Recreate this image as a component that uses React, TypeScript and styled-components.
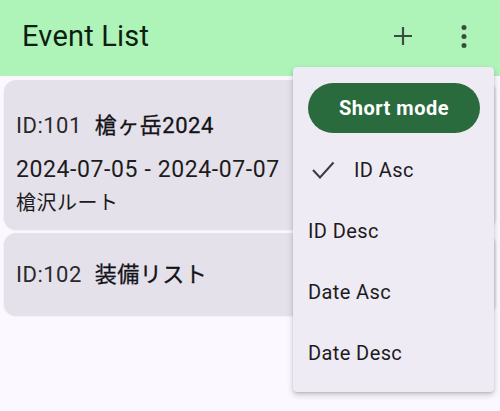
import React from 'react';
import styled, { createGlobalStyle } from 'styled-components';

const GlobalStyle = createGlobalStyle`
  html, body {
    margin: 0;
    padding: 0;
    background: #fcf8ff;
    font-family: Roboto, 'Noto Sans CJK JP', sans-serif;
  }
`;

const events = [
  {
    id: 101,
    title: '槍ヶ岳2024',
    date: '2024-07-05 - 2024-07-07',
    note: '槍沢ルート',
  },
  { id: 102, title: '装備リスト' },
];

const sortItems = ['ID Asc', 'ID Desc', 'Date Asc', 'Date Desc'];

const App = () => {
  return (
    <Page>
      <GlobalStyle />
      <AppBar>
        <Title>Event List</Title>
        <Actions>
          <IconButton aria-label="add">
            <svg width="30" height="30" viewBox="0 0 30 30">
              <path d="M15 6v18M6 15h18" stroke="#3f4a41" strokeWidth="2.2" fill="none" />
            </svg>
          </IconButton>
          <IconButton aria-label="more">
            <svg width="30" height="30" viewBox="0 0 30 30">
              <circle cx="15" cy="6.5" r="2.5" fill="#3f4a41" />
              <circle cx="15" cy="15.5" r="2.5" fill="#3f4a41" />
              <circle cx="15" cy="24.5" r="2.5" fill="#3f4a41" />
            </svg>
          </IconButton>
        </Actions>
      </AppBar>

      <List>
        {events.map((ev) => (
          <Card key={ev.id} $expanded={!!ev.date}>
            <CardHeader>
              <EventId>ID:{ev.id}</EventId>
              <EventTitle>{ev.title}</EventTitle>
            </CardHeader>
            {ev.date && <DateLine>{ev.date}</DateLine>}
            {ev.note && <Note>{ev.note}</Note>}
          </Card>
        ))}
      </List>

      <Menu>
        <ModeButton>Short mode</ModeButton>
        <MenuList>
          {sortItems.map((item, i) => (
            <MenuItem key={item}>
              {i === 0 && (
                <CheckMark width="24" height="20" viewBox="0 0 24 20">
                  <polyline
                    points="2,10 9,17.5 22.5,2.5"
                    stroke="#3d3a42"
                    strokeWidth="2"
                    fill="none"
                  />
                </CheckMark>
              )}
              <span>{item}</span>
            </MenuItem>
          ))}
        </MenuList>
      </Menu>
    </Page>
  );
};

const Page = styled.div`
  position: relative;
  width: 500px;
  height: 411px;
  overflow: hidden;
  background: #fcf8ff;
`;

const AppBar = styled.header`
  height: 76px;
  background: #aef4b9;
  display: flex;
  align-items: center;
  justify-content: space-between;
  padding: 0 21px 0 22px;
  box-sizing: border-box;
`;

const Title = styled.h1`
  margin: 0 0 4px;
  font-size: 29px;
  font-weight: 400;
  letter-spacing: 0.2px;
  color: #0e1f12;
`;

const Actions = styled.div`
  display: flex;
  align-items: center;
  gap: 31px;
  margin-bottom: 4px;
`;

const IconButton = styled.button`
  width: 30px;
  height: 30px;
  padding: 0;
  border: none;
  background: none;
  display: flex;
`;

const List = styled.div`
  display: flex;
  flex-direction: column;
  gap: 4px;
  padding: 4px;
`;

const Card = styled.div<{ $expanded: boolean }>`
  background: #e4e1ea;
  border-radius: 12px;
  padding: ${({ $expanded }) => ($expanded ? '28px 12px 11px' : '24px 12px 22px')};
  box-shadow: 0 1px 2px rgba(0, 0, 0, 0.12);
  color: #1c1b20;
`;

const CardHeader = styled.div`
  display: flex;
  align-items: baseline;
  gap: 13px;
  height: 36px;
  line-height: 36px;
`;

const EventId = styled.span`
  font-size: 22px;
  letter-spacing: 0.5px;
  color: #2a282e;
`;

const EventTitle = styled.span`
  font-size: 22px;
  font-weight: 400;
  letter-spacing: 0.5px;
  color: #141317;
  -webkit-text-stroke: 0.3px #141317;
`;

const DateLine = styled.div`
  margin-top: 11px;
  font-size: 23px;
  line-height: 30px;
  letter-spacing: 0.6px;
`;

const Note = styled.div`
  margin-top: 3px;
  font-size: 20px;
  line-height: 30px;
  letter-spacing: 0.5px;
`;

const Menu = styled.div`
  position: absolute;
  left: 293px;
  top: 67px;
  width: 201px;
  height: 325px;
  box-sizing: border-box;
  padding: 16px 0 9px;
  background: #eeebf5;
  border-radius: 4px;
  box-shadow: 0 3px 6px rgba(0, 0, 0, 0.2), 0 1px 2px rgba(0, 0, 0, 0.12);
`;

const ModeButton = styled.button`
  display: block;
  margin: 0 0 0 15px;
  width: 172px;
  height: 50px;
  border: none;
  border-radius: 25px;
  background: #2a6b3e;
  color: #ffffff;
  font-family: Roboto, sans-serif;
  font-size: 20px;
  font-weight: 700;
  letter-spacing: 0.5px;
`;

const MenuList = styled.div`
  margin-top: 6px;
  display: flex;
  flex-direction: column;
`;

const MenuItem = styled.div`
  height: 61px;
  display: flex;
  align-items: center;
  padding-left: 15px;
  font-size: 20px;
  letter-spacing: 0.4px;
  color: #1d1b20;
`;

const CheckMark = styled.svg`
  margin: 0 19px 0 3px;
`;

export default App;
